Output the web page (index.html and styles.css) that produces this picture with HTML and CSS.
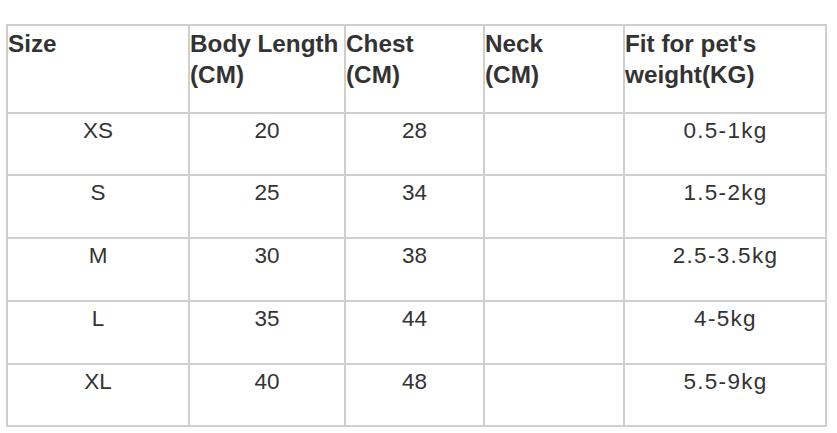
FILE: index.html
```html
<!DOCTYPE html>
<html>
<head>
<meta charset="utf-8">
<link rel="stylesheet" href="styles.css">
</head>
<body>
<div class="size-table">
  <div class="cell head">Size</div>
  <div class="cell head">Body Length (CM)</div>
  <div class="cell head">Chest<br>(CM)</div>
  <div class="cell head">Neck<br>(CM)</div>
  <div class="cell head">Fit for pet's weight(KG)</div>

  <div class="cell">XS</div><div class="cell">20</div><div class="cell">28</div><div class="cell"></div><div class="cell weight">0.5-1kg</div>
  <div class="cell">S</div><div class="cell">25</div><div class="cell">34</div><div class="cell"></div><div class="cell weight">1.5-2kg</div>
  <div class="cell">M</div><div class="cell">30</div><div class="cell">38</div><div class="cell"></div><div class="cell weight">2.5-3.5kg</div>
  <div class="cell">L</div><div class="cell">35</div><div class="cell">44</div><div class="cell"></div><div class="cell weight">4-5kg</div>
  <div class="cell">XL</div><div class="cell">40</div><div class="cell">48</div><div class="cell"></div><div class="cell weight">5.5-9kg</div>
</div>
</body>
</html>
```
FILE: styles.css
```css
html, body {
  margin: 0;
  padding: 0;
  background: #ffffff;
}

body {
  padding: 24px 0 0 6px;
  font-family: "Liberation Sans", Arial, Helvetica, sans-serif;
  color: #333333;
}

.size-table {
  display: grid;
  grid-template-columns: 180px 154px 137px 138px 200px;
  grid-template-rows: 86px 60px 61px 61px 61px 60px;
  gap: 2px;
  padding: 2px;
  background: #cfcfcf;
  width: max-content;
}

.cell {
  background: #ffffff;
  font-size: 22.5px;
  line-height: 26px;
  text-align: center;
  padding-top: 4px;
}

.cell.weight {
  letter-spacing: 1.3px;
  padding-left: 1px;
}

.cell.head {
  font-size: 24.3px;
  font-weight: bold;
  line-height: 31px;
  text-align: left;
  padding-top: 2px;
  padding-left: 0;
  letter-spacing: 0;
}
```
